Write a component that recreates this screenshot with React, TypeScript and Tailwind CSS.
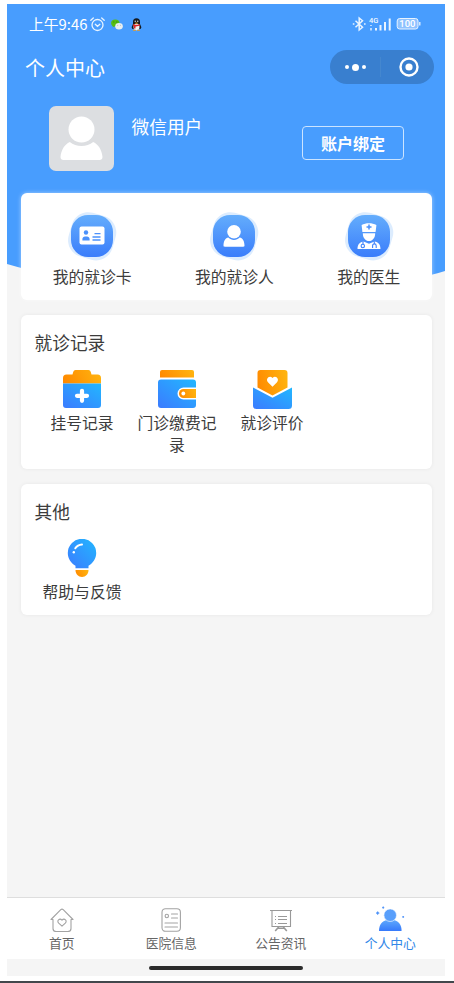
import type { ReactNode } from 'react';

const BlobIcon = ({ id, children }: { id: string; children: ReactNode }) => (
  <svg width="48" height="48" viewBox="0 0 48 48" fill="none" className="overflow-visible">
    <defs>
      <linearGradient id={id} x1="0" y1="0" x2="0" y2="1">
        <stop offset="0" stopColor="#64adfc" />
        <stop offset="1" stopColor="#3a7dfb" />
      </linearGradient>
    </defs>
    <rect x="1.5" y="1.5" width="45.5" height="45.5" rx="17" fill="#dcecfe" transform="rotate(16 24 24)" />
    <rect x="3" y="3" width="42" height="42" rx="17" fill={`url(#${id})`} />
    {children}
  </svg>
);

const CardIcon = () => (
  <BlobIcon id="blob-card">
    <rect x="11.5" y="14.5" width="25" height="18" rx="2" fill="#fff" />
    <circle cx="18" cy="20.5" r="2.2" fill="#4b91fb" />
    <path d="M14.4 28.5v-1.4c0-1.7 1.2-2.7 2.6-2.7h2c1.4 0 2.6 1 2.6 2.7v1.4z" fill="#4b91fb" />
    <path d="M26.5 21.7h6M24.5 25h8M24.5 28h8" stroke="#4b91fb" strokeWidth="1.3" />
  </BlobIcon>
);

const PatientIcon = () => (
  <BlobIcon id="blob-patient">
    <circle cx="24" cy="19.7" r="6.8" fill="#fff" />
    <path d="M13.5 33.6c0-4.8 2-7.6 4.8-8.1 1.6 1.6 3.5 2.4 5.7 2.4s4.1-.8 5.7-2.4c2.8.5 4.8 3.3 4.8 8.1 0 .8-.5 1.2-1.2 1.2H14.7c-.7 0-1.2-.4-1.2-1.2z" fill="#fff" />
  </BlobIcon>
);

const DoctorIcon = () => (
  <BlobIcon id="blob-doctor">
    <path d="M16.6 13c4.2-2.2 10.6-2.2 14.8 0l-.8 7H17.4z" fill="#fff" />
    <path d="M24 12.6v5M21.5 15.1h5" stroke="#4b91fb" strokeWidth="1.5" />
    <path d="M17.8 21.2h12.4c0 4.6-2.6 7.8-6.2 7.8s-6.2-3.2-6.2-7.8z" fill="#fff" />
    <path d="M12.5 37c0-4.6 2.2-7 6-7.6l5.5 2.4 5.5-2.4c3.8.6 6 3 6 7.6z" fill="#fff" />
    <circle cx="17.8" cy="34" r="1.7" stroke="#3f82fb" strokeWidth="1.1" />
    <path d="M18 32.2v-3M27.6 36v-2.2c0-1.2.7-1.9 1.7-1.9s1.9.7 1.9 1.9V36M29.3 31.8v-2.5" stroke="#3f82fb" strokeWidth="1.1" />
  </BlobIcon>
);

const Gradients = ({ id }: { id: string }) => (
  <defs>
    <linearGradient id={`${id}-o`} x1="0" y1="0.6" x2="1" y2="0.4">
      <stop offset="0" stopColor="#ff8a00" />
      <stop offset="1" stopColor="#ffb30f" />
    </linearGradient>
    <linearGradient id={`${id}-b`} x1="0" y1="1" x2="1" y2="0">
      <stop offset="0" stopColor="#3b7bff" />
      <stop offset="1" stopColor="#22b7ff" />
    </linearGradient>
  </defs>
);

const RegisterIcon = () => (
  <svg width="38" height="38" viewBox="0 0 38 38">
    <Gradients id="reg" />
    <path d="M0 13.5V8a3.5 3.5 0 0 1 3.5-3.5h6l.7-2.5Q10.7 0 12.5 0h13q1.8 0 2.3 2l.7 2.5h6A3.5 3.5 0 0 1 38 8v5.5z" fill="url(#reg-o)" />
    <path d="M0 13.5h38V35a3 3 0 0 1-3 3H3a3 3 0 0 1-3-3z" fill="url(#reg-b)" />
    <path d="M19 20.8v10M14 25.8h10" stroke="#fff" strokeWidth="4.2" strokeLinecap="round" />
  </svg>
);

const WalletIcon = () => (
  <svg width="38" height="38" viewBox="0 0 38 38">
    <Gradients id="wal" />
    <path d="M2 7.5V2a2 2 0 0 1 2-2h30a2 2 0 0 1 2 2v5.5z" fill="url(#wal-o)" />
    <path d="M3 9.5h32a3 3 0 0 1 3 3v5H25.5a6 6 0 0 0 0 12H38V35a3 3 0 0 1-3 3H3a3 3 0 0 1-3-3V12.5a3 3 0 0 1 3-3z" fill="url(#wal-b)" />
    <path d="M38 19H25.5a4.5 4.5 0 0 0 0 9H38z" fill="url(#wal-o)" />
    <circle cx="25.3" cy="23.5" r="1.9" fill="#fff" />
  </svg>
);

const ReviewIcon = () => (
  <svg width="39" height="39" viewBox="0 0 39 39">
    <Gradients id="rev" />
    <path d="M4.5 17.5V3a3 3 0 0 1 3-3h24a3 3 0 0 1 3 3v14.5l-15 8z" fill="url(#rev-o)" />
    <path d="M0 17.5l19.5 10.2L39 17.5v18a3.5 3.5 0 0 1-3.5 3.5h-32A3.5 3.5 0 0 1 0 35.5z" fill="url(#rev-b)" />
    <path d="M19.5 16.7l-4.3-4.1c-3.3-3.3 1.1-8 4.3-4.6 3.2-3.4 7.6 1.3 4.3 4.6z" fill="#fff" />
  </svg>
);

const BulbIcon = () => (
  <svg width="38" height="38" viewBox="0 0 38 38" fill="none">
    <Gradients id="bulb" />
    <path d="M12.5 29.3v-2.5C8 24.3 4.8 19.5 4.8 14a14.2 14.2 0 0 1 28.4 0c0 5.5-3.2 10.3-7.7 12.8v2.5z" fill="url(#bulb-b)" />
    <path d="M12.5 31h13c0 4-2.8 7-6.5 7s-6.5-3-6.5-7z" fill="url(#bulb-o)" />
    <path d="M12.3 9.3c1.4-2.2 3.7-3.6 6.7-3.8" stroke="#fff" strokeWidth="2" strokeLinecap="round" />
    <circle cx="10.8" cy="13.2" r="1.2" fill="#fff" />
  </svg>
);

const HomeTabIcon = () => (
  <svg width="24" height="24" viewBox="0 0 24 24" fill="none" stroke="#a3a3a3" strokeWidth="1.1" strokeLinecap="round" strokeLinejoin="round">
    <path d="M1 11.5L10.8 1.6q1.2-1 2.4 0L23 11.5h-2v9q0 3-3 3H6q-3 0-3-3v-9z" />
    <path d="M12 18.2l-3.3-3c-2.4-2.5.9-5.5 3.3-3 2.4-2.5 5.7.5 3.3 3z" />
  </svg>
);

const HospitalTabIcon = () => (
  <svg width="24" height="24" viewBox="0 0 24 24" fill="none" stroke="#a3a3a3" strokeWidth="1.1" strokeLinecap="round">
    <rect x="3" y="0.7" width="18.4" height="22.6" rx="3.5" />
    <circle cx="7.8" cy="8" r="1.7" />
    <path d="M12.5 6h6M12.5 10h6M6 15h12.5M6 19h12.5" />
  </svg>
);

const NewsTabIcon = () => (
  <svg width="24" height="24" viewBox="0 0 24 24" fill="none" stroke="#999" strokeWidth="1.1">
    <path d="M1 2.5h22M3 2.5v16h18.5v-16" />
    <path d="M9 8.5h9M9 11.5h9M9 15.5h9M6 8.5h1M6 11.5h1M6 15.5h1" />
    <path d="M9.7 19l-3.5 4M14.3 19l3.5 4M8.5 20.2h7" strokeWidth="1.6" />
  </svg>
);

const MineTabIcon = () => (
  <svg width="30" height="26" viewBox="0 0 30 26">
    <defs>
      <linearGradient id="mine" x1="0" y1="0" x2="0" y2="1">
        <stop offset="0" stopColor="#5ea8fc" />
        <stop offset="1" stopColor="#3579fb" />
      </linearGradient>
    </defs>
    <path d="M4 25c0-6.2 3-9.7 8-10.9h6.6c5 1.2 8 4.7 8 10.9z" fill="url(#mine)" />
    <circle cx="15.2" cy="9.2" r="6.3" fill="#599ffb" stroke="#fff" strokeWidth="0.6" />
    <path d="M2.7 5.5l.5 1.1 1.1.5-1.1.5-.5 1.1-.5-1.1-1.1-.5 1.1-.5zM8.2.6l.3.7.7.3-.7.3-.3.7-.3-.7-.7-.3.7-.3zM28.2 10l.3.6.6.3-.6.3-.3.6-.3-.6-.6-.3.6-.3z" fill="#3b86f7" stroke="#3b86f7" strokeWidth="0.5" />
  </svg>
);

const StatusBar = () => (
  <div className="flex h-10 items-center pl-[22px] pr-6 text-white">
    <span className="w-[58px] whitespace-nowrap text-[14.8px] leading-5">上午9:46</span>
    <svg className="ml-[3px]" width="15" height="15" viewBox="0 0 15 15" fill="none" stroke="#e9f4ff" strokeWidth="1.3" strokeLinecap="round">
      <circle cx="7.5" cy="8" r="5.5" />
      <path d="M.8 3.3L3.3 1M14.2 3.3L11.7 1M5.3 7.3l2.2 2 2.4-2" />
    </svg>
    <svg className="ml-[6px]" width="12" height="11" viewBox="0 0 12 11">
      <ellipse cx="4.3" cy="4" rx="4.2" ry="3.6" fill="#55be13" />
      <path d="M1.6 8.2l.4-2L4 7z" fill="#55be13" />
      <ellipse cx="8" cy="7.2" rx="3.8" ry="3.2" fill="#e8eef0" />
      <path d="M2.3 3h1M5.3 3h1" stroke="#246b17" strokeWidth="0.8" />
      <path d="M6.3 6.4h.8M9 6.4h.8" stroke="#9aa5aa" strokeWidth="0.7" />
    </svg>
    <svg className="ml-2" width="11" height="13" viewBox="0 0 11 13">
      <path d="M1.5 11l-.9-1.8L2 6V4a3.5 3.7 0 0 1 7 0v2l1.4 3.2L9.5 11z" fill="#15191f" />
      <ellipse cx="5.5" cy="9" rx="3" ry="3.2" fill="#f3f5f5" />
      <path d="M2 5.9q3.5 1.9 7 0v1.7q-2 .9-4.5.8v2H3V8.2l-1-.6z" fill="#df2525" />
      <ellipse cx="4.2" cy="3.2" rx=".6" ry=".8" fill="#fff" />
      <ellipse cx="6.8" cy="3.2" rx=".6" ry=".8" fill="#fff" />
      <path d="M3.6 5q1.9-1 3.8 0-1.900 1.4-3.8 0z" fill="#f7a51c" />
      <path d="M2 12.2h3M6 12.2h3" stroke="#e59b27" strokeWidth="1.1" />
    </svg>
    <svg className="ml-auto" width="69" height="16" viewBox="0 0 69 16" fill="none" stroke="#e9f4ff">
      <path d="M3.5 4.7l7 6.6L7.2 14V2l3.3 2.7-7 6.6M.8 8h1.6M12 8h1.6" strokeWidth="1.5" />
      <text x="17" y="7" fill="#f3f9ff" stroke="none" fontSize="7.5" fontWeight="500" fontFamily="Roboto, sans-serif">4G</text>
      <path d="M19 9v1M19 12v2.5" strokeWidth="1.4" />
      <path d="M24 12v2.5M28.5 9v5.5M33 6v8.5M37.7 2.5v12" strokeWidth="2" />
      <rect x="45.2" y="2.5" width="20.8" height="10.5" rx="2.5" fill="#8fc2ff" />
      <path d="M67.8 6v3.5" strokeWidth="1.3" />
      <text x="47.3" y="11.2" fill="#fff" stroke="none" fontSize="9.5" fontWeight="500" fontFamily="Roboto, sans-serif">100</text>
    </svg>
  </div>
);

const TitleBar = () => (
  <div className="flex h-[46px] items-center justify-between pl-[18px] pr-[11px]">
    <h1 className="mt-px text-[20px] leading-7 text-white">个人中心</h1>
    <div className="flex h-[34px] w-[104px] items-center rounded-full bg-[#397fcf]">
      <div className="flex flex-1 items-center justify-center gap-[3px]">
        <span className="size-1 rounded-full bg-white" />
        <span className="size-[7px] rounded-full bg-white" />
        <span className="size-1 rounded-full bg-white" />
      </div>
      <div className="h-5 w-px bg-[#4487cf]" />
      <div className="flex flex-1 items-center justify-center pl-[3px]">
        <svg width="20" height="20" viewBox="0 0 20 20">
          <circle cx="10" cy="10" r="8.5" fill="none" stroke="#fff" strokeWidth="2.4" />
          <circle cx="10" cy="10" r="3.6" fill="#fff" />
        </svg>
      </div>
    </div>
  </div>
);

const Profile = () => (
  <div className="flex items-start pl-[41.5px] pr-[41px] pt-4">
    <svg width="65" height="65" viewBox="0 0 65 65">
      <rect width="65" height="65" rx="7" fill="#dcdee1" />
      <circle cx="32.5" cy="23.5" r="13" fill="#fff" />
      <path d="M11.5 51c.6-7 4-12.7 9.3-15.1 3.3 2.5 7.2 4 11.7 4s8.4-1.5 11.7-4C49.5 38.3 53 44 53.5 51c0 1.9-1.2 3-3 3h-36c-1.8 0-3-1.1-3-3z" fill="#fff" />
    </svg>
    <p className="ml-[18px] mt-2 text-[17.7px] leading-6 text-white">微信用户</p>
    <button className="ml-auto mt-5 h-[34px] w-[102px] rounded-[4px] border border-[#cce4ff] text-[16px] font-bold text-white">
      账户绑定
    </button>
  </div>
);

const shortcuts = [
  { label: '我的就诊卡', icon: <CardIcon /> },
  { label: '我的就诊人', icon: <PatientIcon /> },
  { label: '我的医生', icon: <DoctorIcon /> },
];

const records = [
  { label: '挂号记录', icon: <RegisterIcon /> },
  { label: '门诊缴费记录', icon: <WalletIcon /> },
  { label: '就诊评价', icon: <ReviewIcon /> },
];

const others = [{ label: '帮助与反馈', icon: <BulbIcon /> }];

const tabs = [
  { label: '首页', icon: <HomeTabIcon />, active: false },
  { label: '医院信息', icon: <HospitalTabIcon />, active: false },
  { label: '公告资讯', icon: <NewsTabIcon />, active: false },
  { label: '个人中心', icon: <MineTabIcon />, active: true },
];

type SectionProps = {
  title: string;
  items: { label: string; icon: ReactNode }[];
  className: string;
};

const Section = ({ title, items, className }: SectionProps) => (
  <section className={`rounded-md bg-white pl-[13.5px] pt-[15px] shadow-[0_0_4px_rgba(0,0,0,0.06)] ${className}`}>
    <h2 className="text-[17.7px] leading-6">{title}</h2>
    <ul className="mt-4 flex">
      {items.map((item) => (
        <li key={item.label} className="flex w-[95px] flex-col items-center px-[7px]">
          <div className="flex h-[38px] items-center">{item.icon}</div>
          <span className="mt-1 text-center text-[15.8px] leading-[22px]">{item.label}</span>
        </li>
      ))}
    </ul>
  </section>
);

const App = () => {
  return (
    <div className="flex h-[983px] w-[454px] flex-col bg-white pt-1 font-['Noto_Sans_CJK_SC',sans-serif] text-[#3c3c3c]">
      <div className="relative isolate ml-[7px] flex h-[972px] w-[438px] flex-col bg-[#f5f5f5]">
        <svg className="absolute left-0 top-0 -z-10" width="438" height="296" viewBox="0 0 438 296">
          <path d="M0 0h438v267q-55 18-205 20Q80 284 0 260z" fill="#489dfe" />
        </svg>
        <StatusBar />
        <TitleBar />
        <Profile />

        <main className="mt-[22px] flex flex-1 flex-col pl-3.5 pr-[13px]">
          <section className="flex h-[107px] justify-around rounded-md bg-white pt-[19px] shadow-[0_0_4px_rgba(255,255,255,0.5)]">
            {shortcuts.map((item) => (
              <div key={item.label} className="flex flex-col items-center">
                {item.icon}
                <span className="mt-1.5 text-[15.8px] leading-[22px]">{item.label}</span>
              </div>
            ))}
          </section>
          <Section title="就诊记录" items={records} className="mt-[15px] h-[154px]" />
          <Section title="其他" items={others} className="mt-[15px] h-[131px]" />
        </main>

        <nav className="flex h-[62px] border-t border-[#dedede] bg-white">
          {tabs.map((tab) => (
            <div key={tab.label} className="flex flex-1 flex-col items-center pt-2.5">
              <div className="flex h-6 items-end">{tab.icon}</div>
              <span className={`mt-0.5 text-[12.8px] leading-[18px] ${tab.active ? 'text-[#3388e8]' : 'text-[#666]'}`}>
                {tab.label}
              </span>
            </div>
          ))}
        </nav>
        <div className="flex h-[17px] items-center justify-center">
          <div className="h-1 w-[154px] rounded-full bg-[#2b2b2b]" />
        </div>
      </div>
      <div className="mt-auto h-0.5 bg-[#42474c]" />
    </div>
  );
};

export default App;
